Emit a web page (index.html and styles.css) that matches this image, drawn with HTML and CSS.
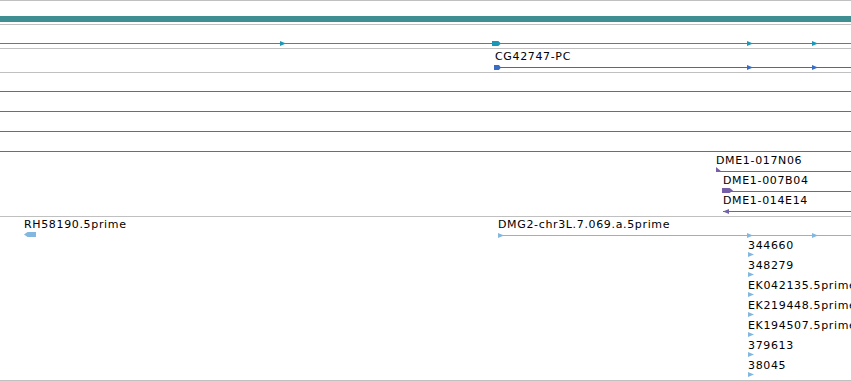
FILE: index.html
```html
<!DOCTYPE html>
<html>
<head>
<meta charset="utf-8">
<link rel="stylesheet" href="styles.css">
</head>
<body>
<div class="browser">
  <div class="track t-a">
    <div class="bar teal-dark"></div>
  </div>

  <div class="track t-b">
    <div class="ln teal" style="left:0;top:18px"></div>
    <div class="tri-r teal" style="left:280px;top:16px"></div>
    <div class="blk-r teal" style="left:492px;top:16px;width:9px"></div>
    <div class="tri-r teal" style="left:747px;top:16px"></div>
    <div class="tri-r teal" style="left:812px;top:16px"></div>
  </div>

  <div class="track t-c">
    <span class="lbl" style="left:495px;top:1px">CG42747-PC</span>
    <div class="ln blue" style="left:494px;top:18px"></div>
    <div class="blk-r blue" style="left:494px;top:16px;width:7px"></div>
    <div class="tri-r blue" style="left:747px;top:16px"></div>
    <div class="tri-r blue" style="left:812px;top:16px"></div>
  </div>

  <div class="track t-d">
    <div class="ln purple" style="left:0;top:18px"></div>
    <div class="ln purple" style="left:0;top:38px"></div>
    <div class="ln purple" style="left:0;top:58px"></div>
    <div class="ln purple" style="left:0;top:78px"></div>

    <span class="lbl" style="left:716px;top:81px">DME1-017N06</span>
    <div class="ln purple" style="left:716px;top:98px"></div>
    <div class="wedge purple" style="left:716px;top:94px"></div>

    <span class="lbl" style="left:723px;top:101px">DME1-007B04</span>
    <div class="ln purple" style="left:722px;top:118px"></div>
    <div class="blk-r purple" style="left:722px;top:115px;width:11px"></div>

    <span class="lbl" style="left:723px;top:121px">DME1-014E14</span>
    <div class="ln purple" style="left:723px;top:138px"></div>
    <div class="tri-l purple" style="left:723px;top:136px"></div>
  </div>

  <div class="track t-e">
    <span class="lbl" style="left:24px;top:1px">RH58190.5prime</span>
    <div class="blk-l lblue" style="left:24px;top:15px;width:12px"></div>

    <span class="lbl" style="left:498px;top:1px">DMG2-chr3L.7.069.a.5prime</span>
    <div class="ln lblue" style="left:498px;top:18px"></div>
    <div class="tri-r lblue" style="left:498px;top:16px"></div>
    <div class="tri-r lblue" style="left:747px;top:16px"></div>
    <div class="tri-r lblue" style="left:812px;top:16px"></div>

    <span class="lbl" style="left:748px;top:22px">344660</span>
    <div class="tri-r lblue" style="left:748px;top:35px"></div>
    <span class="lbl" style="left:748px;top:42px">348279</span>
    <div class="tri-r lblue" style="left:748px;top:55px"></div>
    <span class="lbl" style="left:748px;top:62px">EK042135.5prime</span>
    <div class="tri-r lblue" style="left:748px;top:75px"></div>
    <span class="lbl" style="left:748px;top:82px">EK219448.5prime</span>
    <div class="tri-r lblue" style="left:748px;top:95px"></div>
    <span class="lbl" style="left:748px;top:102px">EK194507.5prime</span>
    <div class="tri-r lblue" style="left:748px;top:115px"></div>
    <span class="lbl" style="left:748px;top:122px">379613</span>
    <div class="tri-r lblue" style="left:748px;top:135px"></div>
    <span class="lbl" style="left:748px;top:142px">38045</span>
    <div class="tri-r lblue" style="left:748px;top:155px"></div>
  </div>
</div>
</body>
</html>
```

FILE: styles.css
```css
html, body {
  margin: 0;
  padding: 0;
  background: #ffffff;
}

.browser {
  width: 851px;
  height: 381px;
  overflow: hidden;
  display: flex;
  flex-direction: column;
  border-bottom: 1px solid #c0c0c0;
  box-sizing: border-box;
}

.track {
  position: relative;
  border-top: 1px solid #c0c0c0;
  overflow: hidden;
  flex: none;
}

.t-a { height: 23px; }
.t-b { height: 23px; }
.t-c { height: 23px; }
.t-d { height: 143px; }
.t-e { height: 163px; }

.bar {
  margin-top: 15px;
  height: 6px;
}

.lbl {
  position: absolute;
  font-family: "DejaVu Sans", "Liberation Sans", sans-serif;
  font-size: 11px;
  line-height: 13px;
  letter-spacing: 0.65px;
  color: #000000;
  white-space: nowrap;
}

.ln {
  position: absolute;
  right: 0;
  height: 1px;
}

.tri-r {
  position: absolute;
  width: 6px;
  height: 5px;
  clip-path: polygon(0 0, 100% 50%, 0 100%);
}

.tri-l {
  position: absolute;
  width: 6px;
  height: 5px;
  clip-path: polygon(100% 0, 0 50%, 100% 100%);
}

.blk-r {
  position: absolute;
  height: 5px;
  clip-path: polygon(0 0, 70% 0, 100% 50%, 70% 100%, 0 100%);
}

.blk-l {
  position: absolute;
  height: 5px;
  clip-path: polygon(30% 0, 100% 0, 100% 100%, 30% 100%, 0 50%);
}

.wedge {
  position: absolute;
  width: 6px;
  height: 5px;
  clip-path: polygon(0 0, 100% 100%, 0 100%);
}

.teal-dark { background: #3f8e91; }
.teal { background: #1c97b6; }
.blue { background: #3a6cc2; }
.purple { background: #7560a8; }
.lblue { background: #82b7df; }
```
